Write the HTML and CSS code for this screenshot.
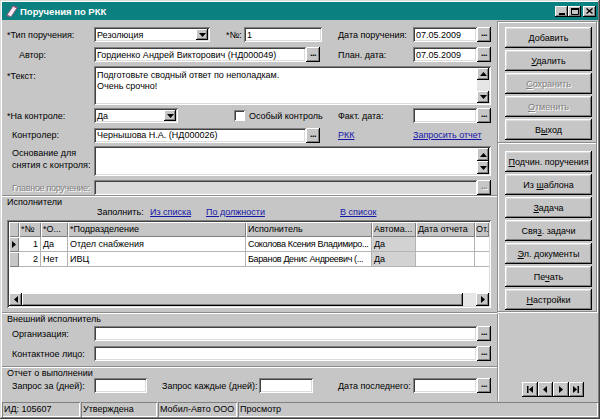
FILE: index.html
```html
<!DOCTYPE html>
<html lang="ru">
<head>
<meta charset="utf-8">
<title>Поручения по РКК</title>
<link rel="stylesheet" href="styles.css">
</head>
<body>
<div class="window">
  <div class="titlebar">
    <svg class="ticon" width="13" height="13" viewBox="0 0 13 13">
      <path d="M2 10 L8 1 L12 3 L6 12 Z" fill="#f4e8f0" stroke="#7a4a6a" stroke-width="0.8"/>
      <path d="M1 9 L4 11 L3 12 Z" fill="#c05080"/>
      <path d="M8 1 L12 3" stroke="#c05080" stroke-width="1.2"/>
    </svg>
    <span class="ttext">Поручения по РКК</span>
    <div class="tbtns">
      <span class="tb"><svg width="6" height="8" viewBox="0 0 6 8"><rect x="0" y="6" width="6" height="2"/></svg></span>
      <span class="tb"><svg width="8" height="7" viewBox="0 0 8 7"><path d="M0.5 0.5h7v6h-7z" fill="none" stroke="#000"/><rect width="8" height="2"/></svg></span>
      <span class="tb close"><svg width="7" height="6" viewBox="0 0 7 6"><path d="M0.5 0.5L6.5 5.5M6.5 0.5L0.5 5.5" stroke="#000" stroke-width="1.4"/></svg></span>
    </div>
  </div>

  <div class="main">
    <div class="left">
      <div class="row r1">
        <span class="lbl">*Тип поручения:</span>
        <div class="fld combo w116"><span class="val">Резолюция</span><span class="dd"><svg width="7" height="4" viewBox="0 0 7 4"><path d="M0 0h7L3.5 4z"/></svg></span></div>
        <span class="lbl-num">*№:</span>
        <div class="fld w78"><span class="val">1</span></div>
        <span class="lbl-right">Дата поручения:</span>
        <div class="lookup w78"><div class="fld"><span class="val">07.05.2009</span></div><span class="dots">...</span></div>
      </div>

      <div class="row r2">
        <span class="lbl ind author">Автор:</span>
        <div class="lookup w226"><div class="fld"><span class="val">Гордиенко Андрей Викторович (НД000049)</span></div><span class="dots">...</span></div>
        <span class="lbl-right gap18">План. дата:</span>
        <div class="lookup w78"><div class="fld"><span class="val">07.05.2009</span></div><span class="dots">...</span></div>
      </div>

      <div class="row-tall r3">
        <span class="lbl lbl-top">*Текст:</span>
        <div class="memo h39">
          <div class="mtext">Подготовьте сводный ответ по неполадкам.<br>Очень срочно!</div>
          <div class="vscroll">
            <span class="sbtn"><svg width="7" height="4" viewBox="0 0 7 4"><path d="M0 4h7L3.5 0z"/></svg></span>
            <span class="strack"></span>
            <span class="sbtn"><svg width="7" height="4" viewBox="0 0 7 4"><path d="M0 0h7L3.5 4z"/></svg></span>
          </div>
        </div>
      </div>

      <div class="row r4">
        <span class="lbl">*На контроле:</span>
        <div class="fld combo w84"><span class="val">Да</span><span class="dd"><svg width="7" height="4" viewBox="0 0 7 4"><path d="M0 0h7L3.5 4z"/></svg></span></div>
        <label class="check"><span class="box"></span><span>Особый контроль</span></label>
        <span class="lbl-right gap0">Факт. дата:</span>
        <div class="lookup w78"><div class="fld"><span class="val"></span></div><span class="dots">...</span></div>
      </div>

      <div class="row r5">
        <span class="lbl ind">Контролер:</span>
        <div class="lookup w226"><div class="fld"><span class="val">Чернышова Н.А. (НД000026)</span></div><span class="dots">...</span></div>
        <a class="link lbl-right gap18">РКК</a>
        <a class="link">Запросить отчет</a>
      </div>

      <div class="row-tall r6">
        <span class="lbl ind lbl-two">Основание для<br>снятия с контроля:</span>
        <div class="memo h30">
          <div class="mtext"></div>
          <div class="vscroll">
            <span class="sbtn"><svg width="7" height="4" viewBox="0 0 7 4"><path d="M0 4h7L3.5 0z"/></svg></span>
            <span class="sbtn"><svg width="7" height="4" viewBox="0 0 7 4"><path d="M0 0h7L3.5 4z"/></svg></span>
          </div>
        </div>
      </div>

      <div class="row r7">
        <span class="lbl ind disabled">Главное поручение:</span>
        <div class="lookup w397 off"><div class="fld"><span class="val"></span></div><span class="dots">...</span></div>
      </div>

      <div class="group g-exec">
        <div class="gtitle">Исполнители</div>
        <div class="fillrow">
          <span class="f-lbl">Заполнить:</span>
          <a class="link f-a">Из списка</a>
          <a class="link f-b">По должности</a>
          <a class="link">В список</a>
        </div>
        <div class="grid">
          <div class="gbody">
            <div class="grow ghead">
              <span class="gc ind"></span><span class="gc">*№</span><span class="gc">*О...</span><span class="gc">*Подразделение</span><span class="gc">Исполнитель</span><span class="gc">Автома...</span><span class="gc">Дата отчета</span><span class="gc last">От.</span>
            </div>
            <div class="grow">
              <span class="gc ind"><svg width="4" height="7" viewBox="0 0 4 7"><path d="M0 0L4 3.5L0 7z"/></svg></span><span class="gc rt">1</span><span class="gc">Да</span><span class="gc">Отдел снабжения</span><span class="gc tight">Соколова Ксения Владимиро...</span><span class="gc ro">Да</span><span class="gc"></span><span class="gc last"></span>
            </div>
            <div class="grow">
              <span class="gc ind"></span><span class="gc rt">2</span><span class="gc">Нет</span><span class="gc">ИВЦ</span><span class="gc tight">Баранов Денис Андреевич (...</span><span class="gc ro">Да</span><span class="gc"></span><span class="gc last"></span>
            </div>
          </div>
          <div class="hscroll">
            <span class="sbtn"><svg width="4" height="7" viewBox="0 0 4 7"><path d="M4 0L0 3.5L4 7z"/></svg></span>
            <span class="htrack"><span class="thumb"></span></span>
            <span class="sbtn"><svg width="4" height="7" viewBox="0 0 4 7"><path d="M0 0L4 3.5L0 7z"/></svg></span>
          </div>
        </div>
      </div>

      <div class="group g-ext">
        <div class="gtitle">Внешний исполнитель</div>
        <div class="row rx1">
          <span class="lbl ind">Организация:</span>
          <div class="lookup w397"><div class="fld"><span class="val"></span></div><span class="dots">...</span></div>
        </div>
        <div class="row rx2">
          <span class="lbl ind">Контактное лицо:</span>
          <div class="lookup w397"><div class="fld"><span class="val"></span></div><span class="dots">...</span></div>
        </div>
      </div>

      <div class="group g-rep">
        <div class="gtitle">Отчет о выполнении</div>
        <div class="row">
          <span class="lbl ind">Запрос за (дней):</span>
          <div class="fld w53"><span class="val"></span></div>
          <span class="lbl-every">Запрос каждые (дней):</span>
          <div class="fld w54"><span class="val"></span></div>
          <span class="lbl-right gap25">Дата последнего:</span>
          <div class="lookup w78"><div class="fld"><span class="val"></span></div><span class="dots">...</span></div>
        </div>
      </div>
    </div>

    <div class="right">
      <div class="bpanel">
        <div class="bgroup">
          <span class="btn"><span><u>Д</u>обавить</span></span>
          <span class="btn"><span><u>У</u>далить</span></span>
          <span class="btn off"><span><u>С</u>охранить</span></span>
          <span class="btn off"><span><u>О</u>тменить</span></span>
          <span class="btn"><span>В<u>ы</u>ход</span></span>
        </div>
        <div class="bsep"></div>
        <div class="bgroup">
          <span class="btn"><span><u>П</u>одчин. поручения</span></span>
          <span class="btn"><span>Из <u>ш</u>аблона</span></span>
          <span class="btn"><span><u>З</u>адача</span></span>
          <span class="btn"><span>Свя<u>з</u>. задачи</span></span>
          <span class="btn"><span><u>Э</u>л. документы</span></span>
          <span class="btn"><span>Пе<u>ч</u>ать</span></span>
          <span class="btn"><span><u>Н</u>астройки</span></span>
        </div>
      </div>
      <div class="navarea">
        <div class="nav">
          <span class="nb"><svg width="6" height="7" viewBox="0 0 6 7"><rect x="0" y="0" width="1.5" height="7"/><path d="M6 0L2 3.5L6 7z"/></svg></span>
          <span class="nb"><svg width="4" height="7" viewBox="0 0 4 7"><path d="M4 0L0 3.5L4 7z"/></svg></span>
          <span class="nb"><svg width="4" height="7" viewBox="0 0 4 7"><path d="M0 0L4 3.5L0 7z"/></svg></span>
          <span class="nb"><svg width="6" height="7" viewBox="0 0 6 7"><path d="M0 0L4 3.5L0 7z"/><rect x="4.5" y="0" width="1.5" height="7"/></svg></span>
        </div>
      </div>
    </div>
  </div>

  <div class="status">
    <span class="sp s1">ИД: 105607</span>
    <span class="sp s2">Утверждена</span>
    <span class="sp s3">Мобил-Авто ООО</span>
    <span class="sp s4">Просмотр</span>
  </div>
</div>
</body>
</html>
```

FILE: styles.css
```css
* { box-sizing: border-box; }
html, body { margin: 0; padding: 0; }
body {
  width: 600px;
  height: 419px;
  overflow: hidden;
  background: #c6c6c6;
  font-family: "Liberation Sans", Arial, sans-serif;
  font-size: 9px;
  color: #000;
}

.window {
  width: 600px;
  height: 419px;
  padding: 2px;
  display: flex;
  flex-direction: column;
  background: #c6c6c6;
  box-shadow: inset -1px -1px #404040, inset 1px 1px #dcdcdc, inset -2px -2px #808080, inset 2px 2px #fff;
}

/* title bar */
.titlebar {
  height: 18px;
  flex: none;
  display: flex;
  align-items: center;
  padding: 0 2px 0 3px;
  background: #0a8080;
  color: #fff;
  font-weight: bold;
  font-size: 9.5px;
}
.ticon { flex: none; margin-right: 2px; }
.ttext { flex: 1; }
.tbtns { display: flex; }
.tb {
  width: 13px;
  height: 11px;
  display: flex;
  align-items: center;
  justify-content: center;
  background: #c6c6c6;
  box-shadow: inset -1px -1px #000, inset 1px 1px #fff, inset -2px -2px #808080;
}
.tb svg { display: block; }
.tb.close { margin-left: 2px; }

/* main */
.main { flex: 1; display: flex; min-height: 0; }
.left { width: 495px; flex: none; padding-top: 7px; }
.right { flex: 1; display: flex; flex-direction: column; }

/* generic 3d field */
.fld {
  height: 15px;
  background: #fff;
  display: flex;
  align-items: center;
  overflow: hidden;
  white-space: nowrap;
  box-shadow: inset 1px 1px #808080, inset -1px -1px #fff, inset 2px 2px #404040, inset -2px -2px #dcdcdc;
}
.val { flex: 1; padding-left: 3px; overflow: hidden; white-space: nowrap; }

.row {
  display: flex;
  align-items: center;
  height: 15px;
  padding-left: 5px;
}
.row-tall { display: flex; align-items: flex-start; padding-left: 5px; }

.lbl { width: 87px; flex: none; white-space: nowrap; }
.lbl.ind { padding-left: 5px; }
.lbl.author { padding-left: 12px; }
.lbl-top { padding-top: 5px; }
.lbl-two { line-height: 12px; padding-top: 1px; }
.disabled { color: #808080; text-shadow: 1px 1px #fff; letter-spacing: -0.3px; }

.lbl-num { width: 18px; margin-left: 16px; flex: none; }
.lbl-right { width: 75px; margin-left: 16px; flex: none; white-space: nowrap; }
.lbl-right.gap18 { margin-left: 18px; }
.lbl-right.gap25 { margin-left: 25px; }
.lbl-right.gap0 { margin-left: 0; }
.lbl-every { width: 97px; margin-left: 15px; flex: none; white-space: nowrap; }

.w116 { width: 116px; flex: none; }
.w84 { width: 84px; flex: none; }
.w78 { width: 78px; flex: none; }
.w226 { width: 226px; flex: none; }
.w397 { width: 397px; flex: none; }
.w53 { width: 53px; flex: none; }
.w54 { width: 54px; flex: none; }

.r2 { margin-top: 5px; }
.r3 { margin-top: 4px; }
.r4 { margin-top: 3px; }
.r5 { margin-top: 5px; height: 14px; }
.r6 { margin-top: 4px; }
.r7 { margin-top: 4px; }

/* combo */
.combo { padding-right: 2px; }
.dd {
  width: 12px;
  height: 11px;
  flex: none;
  display: flex;
  align-items: center;
  justify-content: center;
  background: #c6c6c6;
  box-shadow: inset -1px -1px #000, inset 1px 1px #fff, inset -2px -2px #808080;
}
.dd svg, .sbtn svg, .nb svg, .gc svg { display: block; }

/* lookup with "..." */
.lookup { display: flex; height: 15px; }
.lookup .fld { flex: 1; }
.dots {
  width: 14px;
  height: 15px;
  flex: none;
  display: flex;
  align-items: center;
  justify-content: center;
  padding-bottom: 3px;
  font-weight: bold;
  font-size: 9px;
  letter-spacing: -0.5px;
  background: #c6c6c6;
  box-shadow: inset -1px -1px #000, inset 1px 1px #fff, inset -2px -2px #808080;
}
.lookup.off .fld { background: #dadada; }
.lookup.off .dots { color: #808080; text-shadow: 1px 1px #fff; }

/* memo */
.memo {
  width: 397px;
  flex: none;
  display: flex;
  padding: 2px;
  background: #fff;
  box-shadow: inset 1px 1px #808080, inset -1px -1px #fff, inset 2px 2px #404040, inset -2px -2px #dcdcdc;
}
.h39 { height: 39px; }
.h30 { height: 30px; }
.mtext { flex: 1; padding: 2px 0 0 1px; line-height: 11px; }
.vscroll { width: 12px; display: flex; flex-direction: column; }
.sbtn {
  width: 12px;
  height: 12px;
  flex: none;
  display: flex;
  align-items: center;
  justify-content: center;
  background: #c6c6c6;
  box-shadow: inset -1px -1px #000, inset 1px 1px #fff, inset -2px -2px #808080;
}
.h30 .sbtn { height: 13px; }
.strack { flex: 1; background: #e6e6e6; }

/* checkbox */
.check { display: flex; align-items: center; width: 104px; margin-left: 56px; flex: none; white-space: nowrap; }
.check .box {
  width: 11px;
  height: 11px;
  margin-right: 4px;
  background: #fff;
  box-shadow: inset 1px 1px #808080, inset -1px -1px #fff, inset 2px 2px #404040;
}

.link { color: #1616a8; text-decoration: underline; white-space: nowrap; }

/* groups */
.group {
  padding: 1px 6px 0 0;
  border-top: 1px solid #8c8c8c;
  box-shadow: inset 0 1px #fff;
}
.gtitle { height: 10px; line-height: 10px; padding-left: 5px; }
.g-exec { margin-top: 0; }
.g-ext { margin-top: 4px; }
.g-rep { margin-top: 5px; }
.rx1 { margin-top: 2px; }
.rx2 { margin-top: 5px; }

.fillrow { display: flex; height: 11px; line-height: 11px; padding-left: 95px; }
.f-lbl { width: 53px; }
.f-a { width: 56px; }
.f-b { width: 134px; }

/* grid */
.grid {
  margin: 2px 0 0 5px;
  height: 88px;
  padding: 2px;
  display: flex;
  flex-direction: column;
  background: #fff;
  box-shadow: inset 1px 1px #808080, inset -1px -1px #fff, inset 2px 2px #404040, inset -2px -2px #dcdcdc;
}
.gbody { flex: 1; overflow: hidden; }
.grow {
  display: grid;
  grid-template-columns: 10px 22px 27px 178px 126px 44px 59px 14px;
  height: 15px;
}
.gc {
  border-right: 1px solid #b4b4b4;
  border-bottom: 1px solid #b4b4b4;
  padding: 0 2px;
  line-height: 14px;
  overflow: hidden;
  white-space: nowrap;
}
.gc.tight { letter-spacing: -0.35px; padding: 0 1px 0 2px; }
.gc.last { padding: 0 0 0 1px; border-right: none; }
.gc.rt { text-align: right; }
.gc.ro { background: #d2d2d2; }
.gc.ind, .ghead .gc {
  background: #c6c6c6;
  border: none;
  box-shadow: inset 1px 1px #fff, inset -1px -1px #808080;
}
.gc.ind { display: flex; align-items: center; justify-content: center; padding: 0; }
.hscroll { height: 13px; display: flex; flex: none; }
.hscroll .sbtn { height: 13px; width: 13px; }
.htrack { flex: 1; background: #e6e6e6; display: flex; }
.thumb {
  width: 441px;
  background: #c6c6c6;
  box-shadow: inset -1px -1px #000, inset 1px 1px #fff, inset -2px -2px #808080;
}

/* right panel */
.bpanel {
  margin-top: 1px;
  width: 100px;
  height: 291px;
  padding: 5px 0 0 7px;
  border: 1px solid #8c8c8c;
  box-shadow: inset 1px 1px #fff, 1px 1px #fff;
}
.bgroup { display: flex; flex-direction: column; gap: 2px; }
.bsep {
  height: 2px;
  margin: 2px 0 7px -7px;
  width: 98px;
  border-top: 1px solid #8c8c8c;
  border-bottom: 1px solid #fff;
}
.btn {
  width: 87px;
  height: 21px;
  display: flex;
  align-items: center;
  justify-content: center;
  white-space: nowrap;
  background: #c6c6c6;
  box-shadow: inset -1px -1px #000, inset 1px 1px #fff, inset -2px -2px #808080, inset 2px 2px #dcdcdc;
}
.btn.off { color: #808080; text-shadow: 1px 1px #fff; }

.navarea {
  flex: 1;
  display: flex;
  align-items: flex-end;
  justify-content: flex-end;
  padding: 0 14px 4px 0;
  border-left: 1px solid #8c8c8c;
  box-shadow: inset 1px 0 #fff;
  margin-top: 2px;
}
.nav { display: flex; }
.nb {
  width: 15.5px;
  height: 15px;
  display: flex;
  align-items: center;
  justify-content: center;
  background: #c6c6c6;
  box-shadow: inset -1px -1px #000, inset 1px 1px #fff, inset -2px -2px #808080;
}

/* status bar */
.status { height: 16px; flex: none; display: flex; gap: 1px; padding-top: 1px; }
.sp {
  line-height: 15px;
  padding-left: 2px;
  white-space: nowrap;
  box-shadow: inset 1px 1px #808080, inset -1px -1px #fff;
}
.s1 { width: 78px; }
.s2 { width: 76px; }
.s3 { width: 79px; }
.s4 { flex: 1; }
```
